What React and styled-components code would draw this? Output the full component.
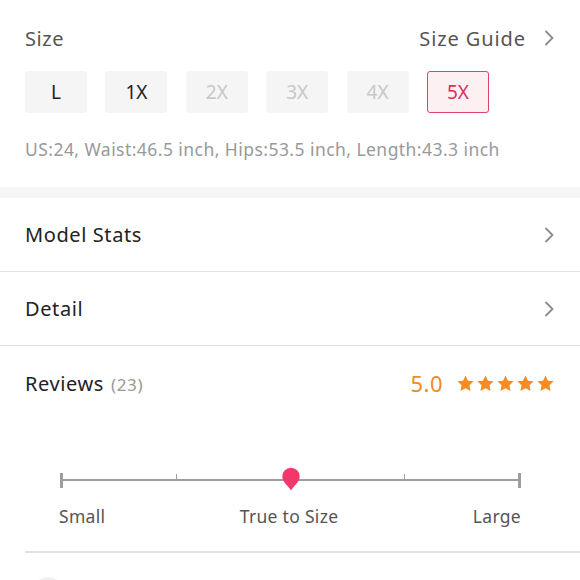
import React from 'react';
import styled, { createGlobalStyle } from 'styled-components';

const GlobalStyle = createGlobalStyle`
  body {
    margin: 0;
    background: #fff;
    font-family: 'Noto Sans', Roboto, sans-serif;
  }
`;

const Page = styled.div`
  width: 580px;
  height: 580px;
  overflow: hidden;
  background: #fff;
`;

const SizeSection = styled.section`
  padding: 22px 25px 0 25px;
  height: 165px;
`;

const HeaderRow = styled.div`
  display: flex;
  justify-content: space-between;
  align-items: center;
  height: 32px;
`;

const Title = styled.span`
  font-size: 20px;
  letter-spacing: 0.6px;
  color: ${({ dark }) => (dark ? '#222' : '#555')};
`;

const GuideLink = styled.div`
  display: flex;
  align-items: center;
  gap: 17px;
  font-size: 20px;
  letter-spacing: 0.9px;
  color: #555;
`;

const SizeList = styled.div`
  display: flex;
  gap: 18.4px;
  margin-top: 17px;
`;

const SizeButton = styled.div`
  width: 62px;
  height: 42px;
  box-sizing: border-box;
  border-radius: 3px;
  display: flex;
  justify-content: center;
  align-items: center;
  font-size: 19px;
  background: ${({ active }) => (active ? '#fdf0f3' : '#f5f5f5')};
  border: 1.5px solid ${({ active }) => (active ? '#e0426c' : 'transparent')};
  color: ${({ active, disabled }) =>
    active ? '#d9315f' : disabled ? '#c8c8c8' : '#222'};
`;

const Measure = styled.p`
  margin: 24px 0 0 0;
  font-size: 17.5px;
  letter-spacing: 0.45px;
  color: #999;
`;

const Band = styled.div`
  height: 11px;
  background: #f6f6f6;
`;

const NavRow = styled.div`
  display: flex;
  justify-content: space-between;
  align-items: center;
  height: 73px;
  padding: 0 25px;
  border-bottom: 1.5px solid #e2e2e2;
  font-size: 20px;
  letter-spacing: 0.6px;
  color: #222;
`;

const ReviewSection = styled.section`
  padding: 0 0 0 25px;
`;

const ReviewHeader = styled.div`
  display: flex;
  justify-content: space-between;
  align-items: center;
  height: 74px;
  padding-right: 25px;
`;

const Count = styled.span`
  font-size: 17px;
  letter-spacing: 0.6px;
  color: #999;
  margin-left: 7px;
`;

const Rating = styled.div`
  display: flex;
  align-items: center;
  gap: 13px;
`;

const Score = styled.span`
  font-size: 22px;
  letter-spacing: 0.5px;
  color: #f08a24;
`;

const Stars = styled.div`
  display: flex;
  gap: 1px;
`;

const FitBlock = styled.div`
  padding: 52px 59px 0 35px;
  height: 79px;
`;

const Track = styled.div`
  position: relative;
  height: 16px;
  display: flex;
  align-items: center;
  justify-content: space-between;
  &::before {
    content: '';
    position: absolute;
    left: 0;
    right: 0;
    top: 7px;
    height: 2px;
    background: #9e9e9e;
  }
`;

const Tick = styled.div`
  position: relative;
  width: ${({ end }) => (end ? '3px' : '1px')};
  height: ${({ end }) => (end ? '15px' : '6px')};
  background: #9e9e9e;
  align-self: ${({ end }) => (end ? 'center' : 'flex-start')};
  margin-top: ${({ end }) => (end ? '0' : '2px')};
`;

const Pin = styled.svg`
  position: absolute;
  left: 50%;
  top: -5px;
  transform: translateX(-50%);
`;

const Labels = styled.div`
  display: flex;
  justify-content: space-between;
  margin-top: 16px;
  margin-left: -1px;
  font-size: 17.5px;
  letter-spacing: 0.3px;
  color: #555;
`;

const Divider = styled.div`
  height: 1.5px;
  background: #e2e2e2;
`;

const NextRow = styled.div`
  padding: 24px 0 0 8px;
`;

const Avatar = styled.div`
  width: 30px;
  height: 30px;
  border-radius: 50%;
  background: #f0f0f0;
`;

const Chevron = () => (
  <svg width="12" height="18" viewBox="0 0 12 18" fill="none">
    <path d="M2.5 2 L9.5 9 L2.5 16" stroke="#8a8a8a" strokeWidth="1.8" />
  </svg>
);

const Star = () => (
  <svg width="19" height="19" viewBox="0 0 24 24">
    <path
      d="M12 1.8l3.1 6.6 7.2.9-5.3 5 1.4 7.2L12 18l-6.4 3.5L7 14.3l-5.3-5 7.2-.9z"
      fill="#f58b24"
    />
  </svg>
);

const sizes = [
  { label: 'L' },
  { label: '1X' },
  { label: '2X', disabled: true },
  { label: '3X', disabled: true },
  { label: '4X', disabled: true },
  { label: '5X', active: true },
];

const App = () => {
  return (
    <Page>
      <GlobalStyle />
      <SizeSection>
        <HeaderRow>
          <Title>Size</Title>
          <GuideLink>
            Size Guide
            <Chevron />
          </GuideLink>
        </HeaderRow>
        <SizeList>
          {sizes.map((s) => (
            <SizeButton key={s.label} active={s.active} disabled={s.disabled}>
              {s.label}
            </SizeButton>
          ))}
        </SizeList>
        <Measure>
          US:24, Waist:46.5 inch, Hips:53.5 inch, Length:43.3 inch
        </Measure>
      </SizeSection>
      <Band />
      <NavRow>
        Model Stats
        <Chevron />
      </NavRow>
      <NavRow>
        Detail
        <Chevron />
      </NavRow>
      <ReviewSection>
        <ReviewHeader>
          <div>
            <Title dark>Reviews</Title>
            <Count>(23)</Count>
          </div>
          <Rating>
            <Score>5.0</Score>
            <Stars>
              {[0, 1, 2, 3, 4].map((i) => (
                <Star key={i} />
              ))}
            </Stars>
          </Rating>
        </ReviewHeader>
        <FitBlock>
          <Track>
            <Tick end />
            <Tick />
            <span />
            <Tick />
            <Tick end />
            <Pin width="19" height="24" viewBox="0 0 19 24">
              <path
                d="M9.5 23.5 C7 19 0.8 15 0.8 9.5 A8.7 8.7 0 0 1 18.2 9.5 C18.2 15 12 19 9.5 23.5 Z"
                fill="#f2386b"
              />
            </Pin>
          </Track>
          <Labels>
            <span>Small</span>
            <span>True to Size</span>
            <span>Large</span>
          </Labels>
        </FitBlock>
        <Divider />
        <NextRow>
          <Avatar />
        </NextRow>
      </ReviewSection>
    </Page>
  );
};

export default App;
